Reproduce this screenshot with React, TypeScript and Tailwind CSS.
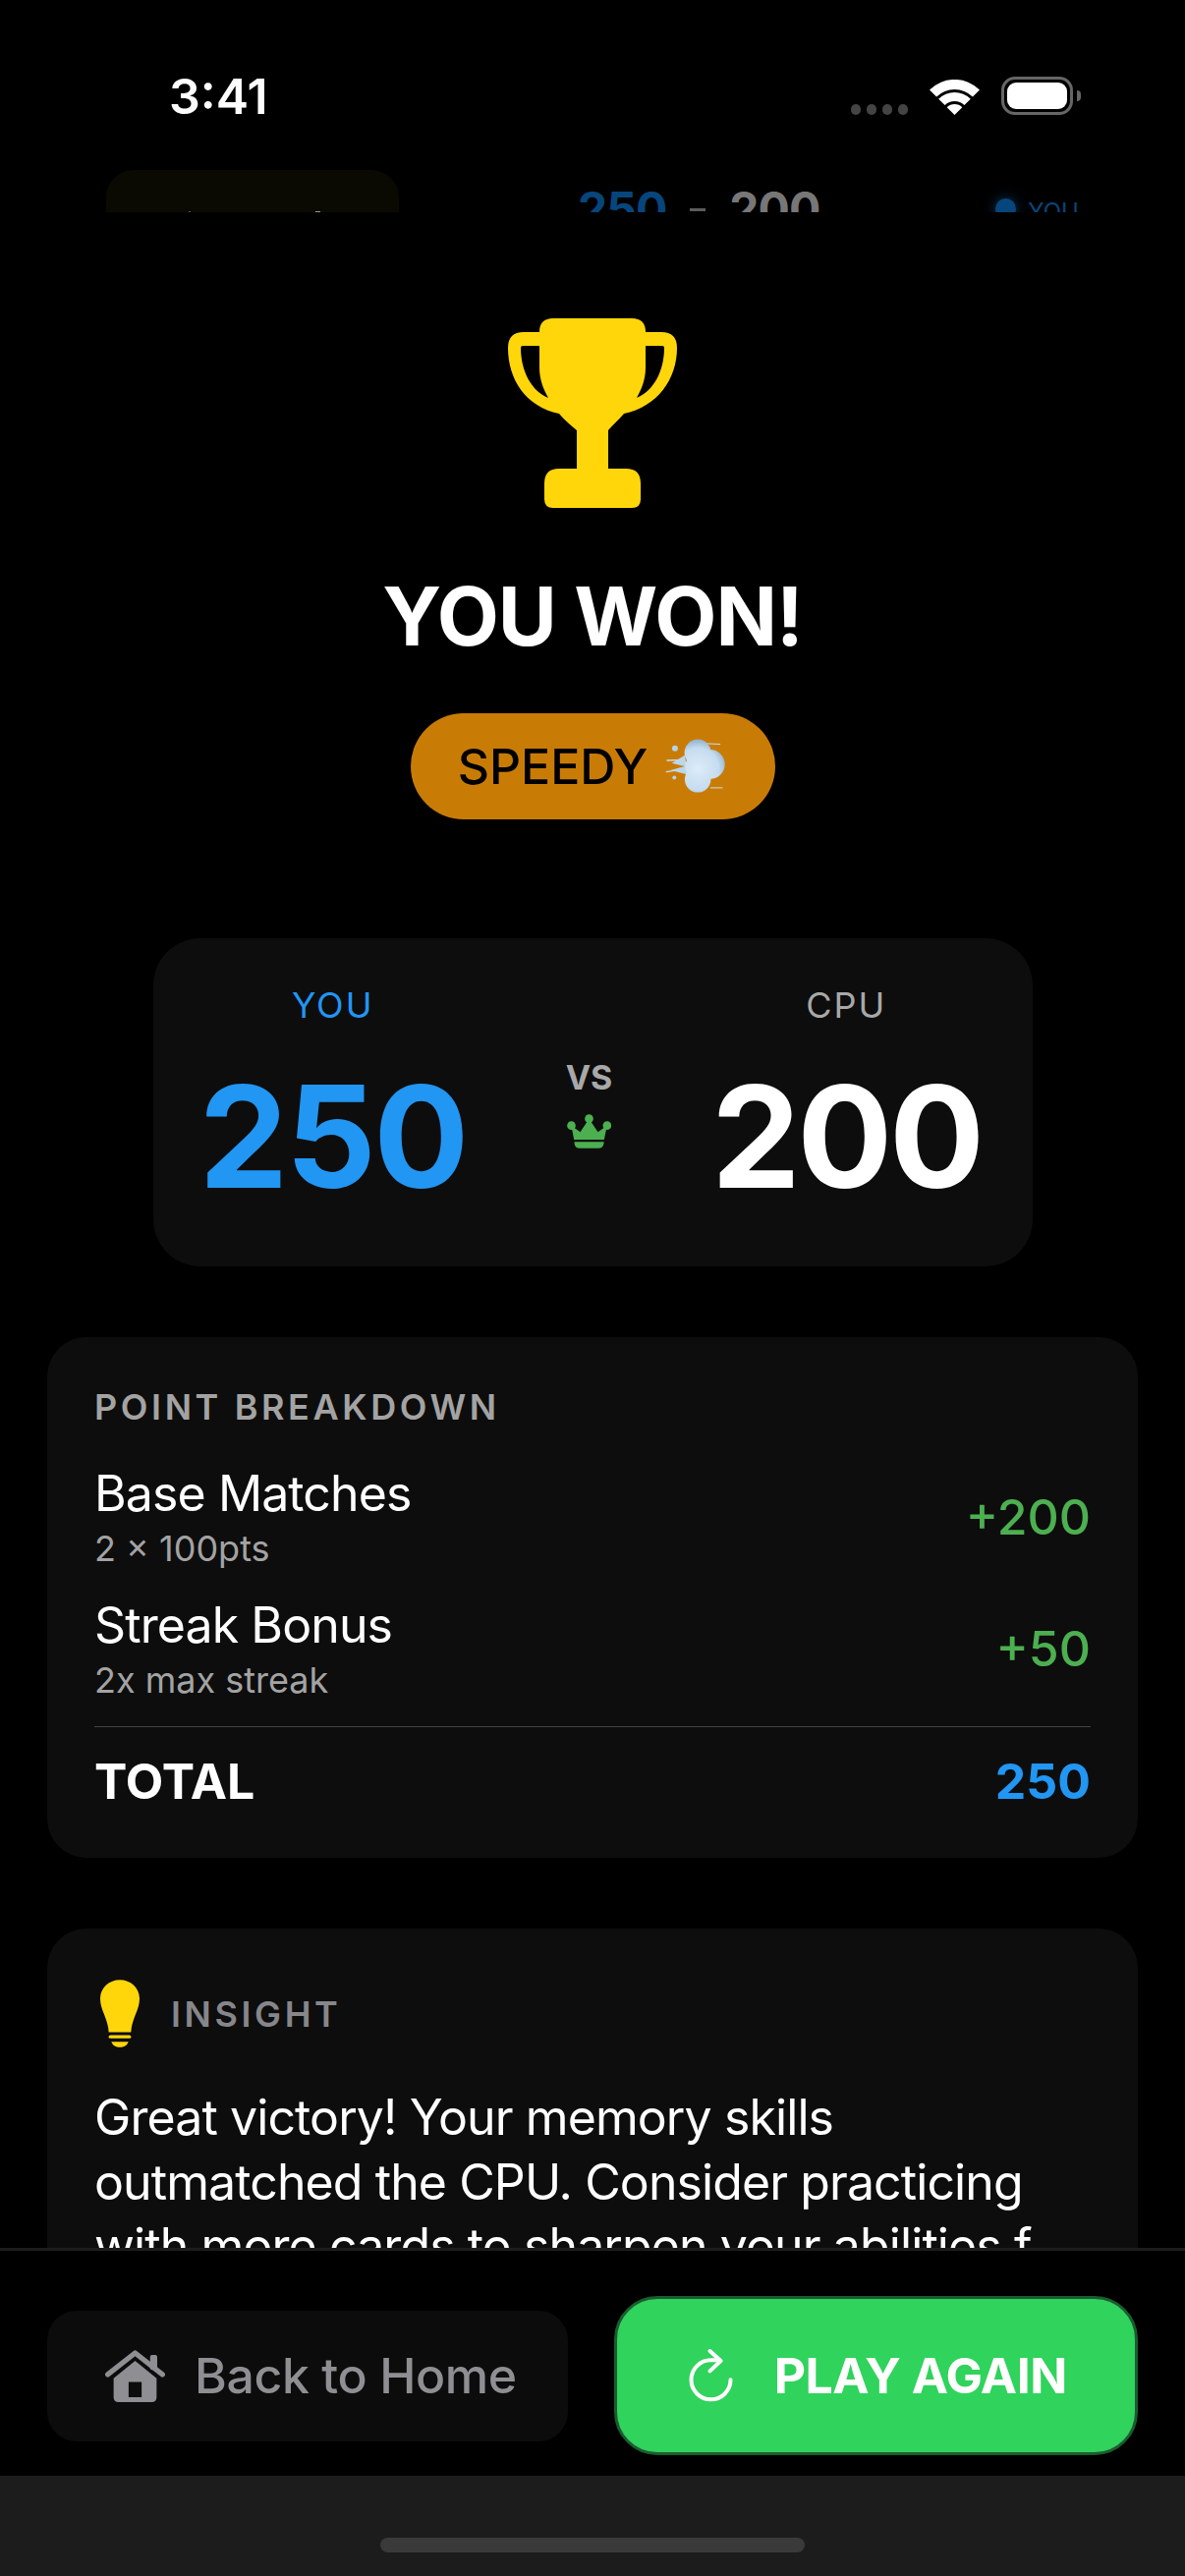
const font = "font-['Inter',sans-serif]";

function Wifi() {
  return (
    <svg viewBox="0 0 51 36" className="w-[51px] h-[36px]" fill="#fff">
      <path d="M0 10.5A36 36 0 0 1 51 10.5L43.9 17.6A26 26 0 0 0 7.1 17.6Z" />
      <path d="M9.2 19.7A23 23 0 0 1 41.8 19.7L35.4 26.1A14 14 0 0 0 15.6 26.1Z" />
      <path d="M17.7 28.2A11 11 0 0 1 33.3 28.2L25.5 36Z" />
    </svg>
  );
}

function Trophy() {
  return (
    <svg viewBox="0 0 172 193" className="w-[172px] h-[193px] flex-none" fill="#ffd60a" fillRule="evenodd">
      <path d="M46 0H126Q140 0 140 14H156Q172 14 172 30C172 62 152 90 118 97C112 104 106 109 102 114V153H120Q135 153 135 168V184Q135 193 126 193H46Q37 193 37 184V168Q37 153 52 153H70V114C64 109 58 104 52 97C18 90 0 62 0 30Q0 14 16 14H32Q32 0 46 0ZM15 28H32V50C32 62 36 72 41 81C24 74 13 54 13 30Q13 28 15 28ZM157 28H140V50C140 62 136 72 131 81C148 74 159 54 159 30Q159 28 157 28Z" />
    </svg>
  );
}

function Dash() {
  return (
    <svg viewBox="30 20 190 180" className="w-[63px] h-[60px]">
      <defs>
        <radialGradient id="puff" gradientUnits="userSpaceOnUse" cx="130" cy="118" r="92">
          <stop offset="0%" stopColor="#dcecf9" />
          <stop offset="70%" stopColor="#c6dcef" />
          <stop offset="100%" stopColor="#8fb0cf" />
        </radialGradient>
      </defs>
      <g stroke="#c9dff0" strokeLinecap="round" fill="none">
        <path d="M150 40L198 42" strokeWidth="3" />
        <path d="M170 176L205 176" strokeWidth="3" />
        <path d="M36 92L90 90" strokeWidth="4" />
        <path d="M34 127L90 118" strokeWidth="4" />
      </g>
      <path d="M90 76L50 100L90 110L46 122L100 136Z" fill="#bcd6ea" />
      <circle cx="60" cy="55" r="9" fill="#b7d2e8" />
      <circle cx="58" cy="145" r="6" fill="#b7d2e8" />
      <g fill="url(#puff)">
        <circle cx="168" cy="104" r="45" />
        <circle cx="130" cy="68" r="41" />
        <circle cx="130" cy="150" r="40" />
        <circle cx="125" cy="110" r="34" />
      </g>
    </svg>
  );
}

function Crown() {
  return (
    <svg viewBox="54 40 134 105" className="w-[45px] h-[35px]" fill="#4caf50">
      <circle cx="121" cy="54" r="13" />
      <circle cx="67" cy="75" r="13" />
      <circle cx="176" cy="75" r="13" />
      <path d="M67 75L94 95L121 54L148 95L176 75L167 118H75Z" />
      <path d="M76 125H167L165 133Q163 144 150 144H92Q79 144 77 133Z" />
    </svg>
  );
}

function Bulb() {
  return (
    <svg viewBox="38 32 120 206" className="w-[40px] h-[69px]" fill="#ffd60a">
      <path d="M98 32C65 32 38 56 38 90C38 125 62 150 64 192H132C134 150 158 125 158 90C158 56 131 32 98 32Z" />
      <rect x="64" y="201" width="68" height="10" rx="5" />
      <path d="M72 221H124C120 232 110 238 98 238C86 238 76 232 72 221Z" />
    </svg>
  );
}

function House() {
  return (
    <svg viewBox="50 35 184 160" className="w-[61px] h-[53px]" fill="#8e8e93">
      <path d="M58 110L142 44L226 110" fill="none" stroke="#8e8e93" strokeWidth="16" strokeLinecap="round" strokeLinejoin="round" />
      <rect x="188" y="50" width="22" height="46" rx="6" />
      <path fillRule="evenodd" d="M142 68L76 122V180Q76 195 91 195H193Q208 195 208 180V122ZM122 133H162V180H122Z" />
    </svg>
  );
}

function Replay() {
  return (
    <svg viewBox="50 34 134 162" className="w-[45px] h-[54px]" fill="none" stroke="#fff" strokeWidth="12" strokeLinecap="round" strokeLinejoin="round">
      <path d="M177 128A60 60 0 1 1 117 68H142" />
      <path d="M114 40L147 70L114 101" />
    </svg>
  );
}

function Row({ title, sub, value }: { title: string; sub: string; value: string }) {
  return (
    <div className="flex items-center justify-between h-[134px]">
      <div>
        <div className="text-[50px] leading-[60px] tracking-[-0.9px] text-white">{title}</div>
        <div className="text-[36px] leading-[42px] mt-[5px] text-[#a3a3a3]">{sub}</div>
      </div>
      <div className="text-[50px] leading-[60px] font-medium mt-[2px] text-[#4caf50]">{value}</div>
    </div>
  );
}

export default function App() {
  return (
    <div className={`${font} w-[1206px] h-[2622px] bg-black flex flex-col overflow-hidden`}>
      <div className="h-[216px] overflow-hidden flex-none">
        <div className="h-[173px] pt-[69px] pl-[172px] pr-[106px] flex items-start justify-between">
          <span className="text-[50px] leading-[58px] font-semibold text-white">3:41</span>
          <div className="flex items-end gap-[22px] pt-[9px]">
            <div className="flex gap-[6px]">
              <span className="w-[10px] h-[11px] rounded-full bg-[#444]" />
              <span className="w-[10px] h-[11px] rounded-full bg-[#444]" />
              <span className="w-[10px] h-[11px] rounded-full bg-[#444]" />
              <span className="w-[10px] h-[11px] rounded-full bg-[#444]" />
            </div>
            <Wifi />
            <div className="flex items-center gap-[4px]">
              <div className="w-[73px] h-[39px] rounded-[14px] border-[3px] border-[#666] p-[3px]">
                <div className="w-full h-full rounded-[9px] bg-white" />
              </div>
              <div className="w-[4px] h-[11px] rounded-r-full bg-[#666]" />
            </div>
          </div>
        </div>
        <div className="pl-[108px] flex items-start">
          <div className="w-[298px] h-[80px] rounded-[28px] bg-[#0a0a03] pt-[42px] pl-[84px] flex items-start">
            <span className="w-[2px] h-[1px] bg-[#555]" />
            <span className="w-[5px] h-[2px] ml-[127px] bg-[#999]" />
          </div>
          <div className="ml-[182px] flex items-center gap-[24px] mt-[10px] text-[48px] leading-[60px] font-bold tracking-[-1px]">
            <span className="text-[#06467c]">250</span>
            <span className="w-[16px] h-[3px] bg-[#5c5c5c] mt-[1px]" />
            <span className="text-[#777]">200</span>
          </div>
          <div className="ml-[179px] flex items-start gap-[12px] mt-[29px]">
            <span className="w-[21px] h-[21px] rounded-full bg-[#06467c] shadow-[0_0_14px_#06345c]" />
            <span className="text-[24px] leading-[28px] text-[#06467c]">YOU</span>
          </div>
        </div>
      </div>

      {/* scrolling content */}
      <div className="flex-1 min-h-0 overflow-hidden flex flex-col items-center pt-[108px]">
        <Trophy />
        <h1 className="flex-none mt-[61px] text-[82px] leading-[100px] font-bold tracking-[-1px] text-white">YOU WON!</h1>
        <div className="flex-none mt-[48px] w-[371px] h-[108px] rounded-full bg-[#c97c05] flex items-center justify-center gap-[18px]">
          <span className="text-[50px] leading-[60px] font-medium text-black">SPEEDY</span>
          <Dash />
        </div>

        <div className="mt-[121px] w-[895px] h-[334px] flex-none rounded-[48px] bg-[#0d0d0d] pl-[47px] pr-[52px] flex items-center justify-between">
          <div className="flex flex-col items-center">
            <span className="text-[36px] leading-[42px] tracking-[2px] text-[#2196f3]">YOU</span>
            <span className="mt-[28px] text-[144px] leading-[170px] font-bold tracking-[-2.5px] text-[#2196f3]">250</span>
          </div>
          <div className="flex flex-col items-center gap-[16px]">
            <span className="text-[34px] leading-[42px] font-bold text-[#a8a8a8]">VS</span>
            <Crown />
          </div>
          <div className="flex flex-col items-center">
            <span className="text-[36px] leading-[42px] tracking-[2px] text-[#a8a8a8]">CPU</span>
            <span className="mt-[28px] text-[144px] leading-[170px] font-bold tracking-[-3.5px] text-white">200</span>
          </div>
        </div>

        <div className="mt-[72px] w-[1110px] flex-none rounded-[40px] bg-[#0d0d0d] px-[48px] pt-[51px] h-[530px]">
          <div className="text-[36px] leading-[40px] font-semibold tracking-[3.6px] text-[#a3a3a3]">POINT BREAKDOWN</div>
          <div className="mt-[24px]">
            <Row title="Base Matches" sub="2 × 100pts" value="+200" />
            <Row title="Streak Bonus" sub="2x max streak" value="+50" />
          </div>
          <div className="border-t border-[#444] mt-[13px] pt-[25px] flex items-center justify-between">
            <span className="text-[50px] leading-[60px] font-bold text-white">TOTAL</span>
            <span className="text-[50px] leading-[60px] font-bold text-[#2196f3]">250</span>
          </div>
        </div>

        <div className="mt-[72px] w-[1110px] flex-none rounded-[40px] bg-[#0d0d0d] px-[48px] pt-[52px] pb-[48px]">
          <div className="flex items-center gap-[32px] pl-[6px]">
            <Bulb />
            <span className="text-[36px] leading-[40px] font-semibold tracking-[3.6px] text-[#86868b]">INSIGHT</span>
          </div>
          <p className="mt-[39px] text-[50px] leading-[65.5px] tracking-[-0.9px] text-white">
            Great victory! Your memory skills outmatched the CPU. Consider practicing with more cards to sharpen your abilities f
          </p>
        </div>
      </div>

      {/* footer actions */}
      <div className="flex-none h-[232px] bg-black border-t-[3px] border-[#1c1c1c] pt-[46px] px-[48px] flex items-center gap-[47px] pb-[21px]">
        <div className="w-[530px] h-[133px] rounded-[30px] bg-[#0c0c0c] pl-[59px] flex items-center gap-[30px]">
          <House />
          <span className="text-[50px] leading-[60px] font-medium tracking-[-0.4px] text-[#8e8e93]">Back to Home</span>
        </div>
        <div className="w-[534px] h-[162px] rounded-[44px] border-[3px] border-[#1a5c30] bg-[#30d35c] pl-[4px] flex items-center justify-center gap-[42px]">
          <Replay />
          <span className="text-[50px] leading-[60px] font-bold tracking-[-0.5px] text-white">PLAY AGAIN</span>
        </div>
      </div>

      {/* home indicator */}
      <div className="flex-none h-[102px] bg-[#1c1c1c] flex justify-center pt-[63px]">
        <div className="w-[432px] h-[15px] rounded-full bg-[#3a3a3a]" />
      </div>
    </div>
  );
}
